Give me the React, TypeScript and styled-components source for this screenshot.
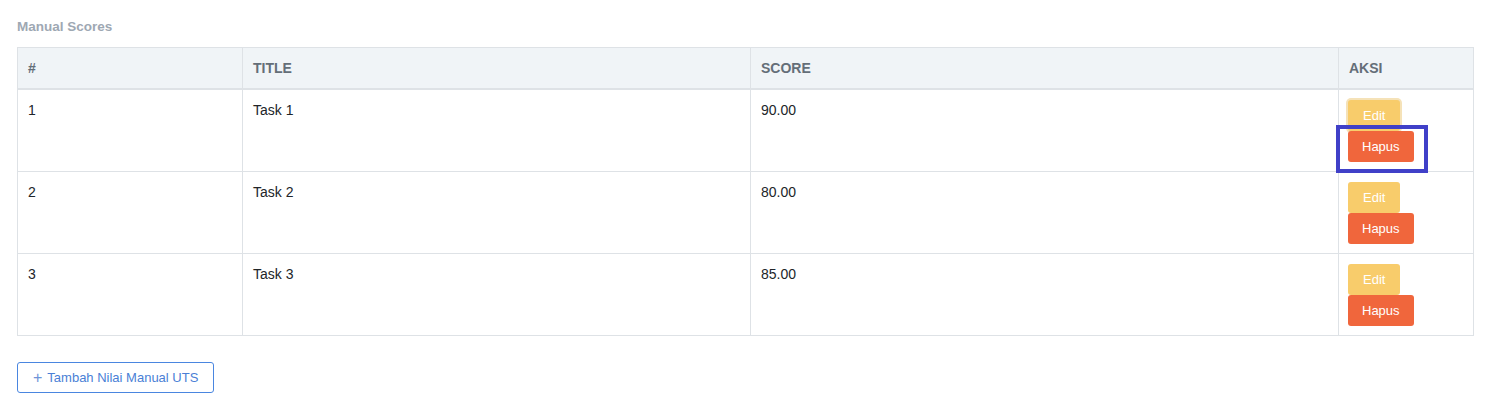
import React from "react";
import styled, { createGlobalStyle } from "styled-components";

const Global = createGlobalStyle`
  html, body { margin: 0; padding: 0; background: #ffffff; }
  body { font-family: "Liberation Sans", Arial, sans-serif; color: #212529; }
`;

const Page = styled.div`
  padding: 17px 19px 0 17px;
  display: flex;
  flex-direction: column;
  align-items: flex-start;
`;

const Title = styled.div`
  font-size: 13.5px;
  font-weight: bold;
  color: #9ea8b3;
  line-height: 20px;
  margin-bottom: 10px;
`;

const Table = styled.table`
  width: 1456px;
  border-collapse: collapse;
  table-layout: fixed;
  font-size: 14px;
`;

const Th = styled.th`
  text-align: left;
  background: #f0f4f7;
  color: #646e78;
  font-weight: bold;
  font-size: 14px;
  line-height: 20px;
  padding: 10px 10px 10px;
  border: 1px solid #dee2e6;
  border-bottom: 2px solid #dee2e6;
`;

const Td = styled.td<{ $actions?: boolean }>`
  vertical-align: top;
  color: #212529;
  line-height: 20px;
  padding: 10px 10px 9px ${(p) => (p.$actions ? "9px" : "10px")};
  border: 1px solid #dee2e6;
  height: 62px;
  position: relative;
`;

const Actions = styled.div`
  display: flex;
  flex-direction: column;
  align-items: flex-start;
`;

const Btn = styled.button<{ $variant: "edit" | "delete"; $focus?: boolean }>`
  font-family: "Liberation Sans", Arial, sans-serif;
  font-size: 13px;
  color: #ffffff;
  border: none;
  border-radius: 3px;
  height: 31px;
  padding: 0 ${(p) => (p.$variant === "edit" ? "15px" : "14px")};
  background: ${(p) => (p.$variant === "edit" ? "#f8cc6b" : "#f0663c")};
  box-shadow: ${(p) => (p.$focus ? "0 0 0 2px #f5e2b8" : "none")};
  cursor: pointer;
`;

const Highlight = styled.div`
  position: absolute;
  left: -3px;
  top: 35px;
  width: 84px;
  height: 40px;
  border: 4px solid #4040c8;
  pointer-events: none;
`;

const AddButton = styled.button`
  margin-top: 26px;
  height: 31px;
  padding: 0 15px 0 15px;
  background: #ffffff;
  border: 1px solid #4a86e0;
  border-radius: 3px;
  color: #4a7fd6;
  font-family: "Liberation Sans", Arial, sans-serif;
  font-size: 13px;
  display: flex;
  align-items: center;
  gap: 5px;
  cursor: pointer;
`;

const Plus = styled.span`
  font-size: 16px;
  font-weight: 300;
  color: #6f94d8;
  line-height: 1;
`;

const rows = [
  { n: 1, title: "Task 1", score: "90.00" },
  { n: 2, title: "Task 2", score: "80.00" },
  { n: 3, title: "Task 3", score: "85.00" },
];

export default function App() {
  return (
    <>
      <Global />
      <Page>
        <Title>Manual Scores</Title>
        <Table>
          <colgroup>
            <col style={{ width: 225 }} />
            <col style={{ width: 508 }} />
            <col style={{ width: 588 }} />
            <col style={{ width: 135 }} />
          </colgroup>
          <thead>
            <tr>
              <Th>#</Th>
              <Th>TITLE</Th>
              <Th>SCORE</Th>
              <Th>AKSI</Th>
            </tr>
          </thead>
          <tbody>
            {rows.map((r, i) => (
              <tr key={r.n}>
                <Td>{r.n}</Td>
                <Td>{r.title}</Td>
                <Td>{r.score}</Td>
                <Td $actions>
                  <Actions>
                    <Btn $variant="edit" $focus={i === 0}>Edit</Btn>
                    <Btn $variant="delete">Hapus</Btn>
                  </Actions>
                  {i === 0 && <Highlight />}
                </Td>
              </tr>
            ))}
          </tbody>
        </Table>
        <AddButton>
          <Plus>+</Plus>
          Tambah Nilai Manual UTS
        </AddButton>
      </Page>
    </>
  );
}
